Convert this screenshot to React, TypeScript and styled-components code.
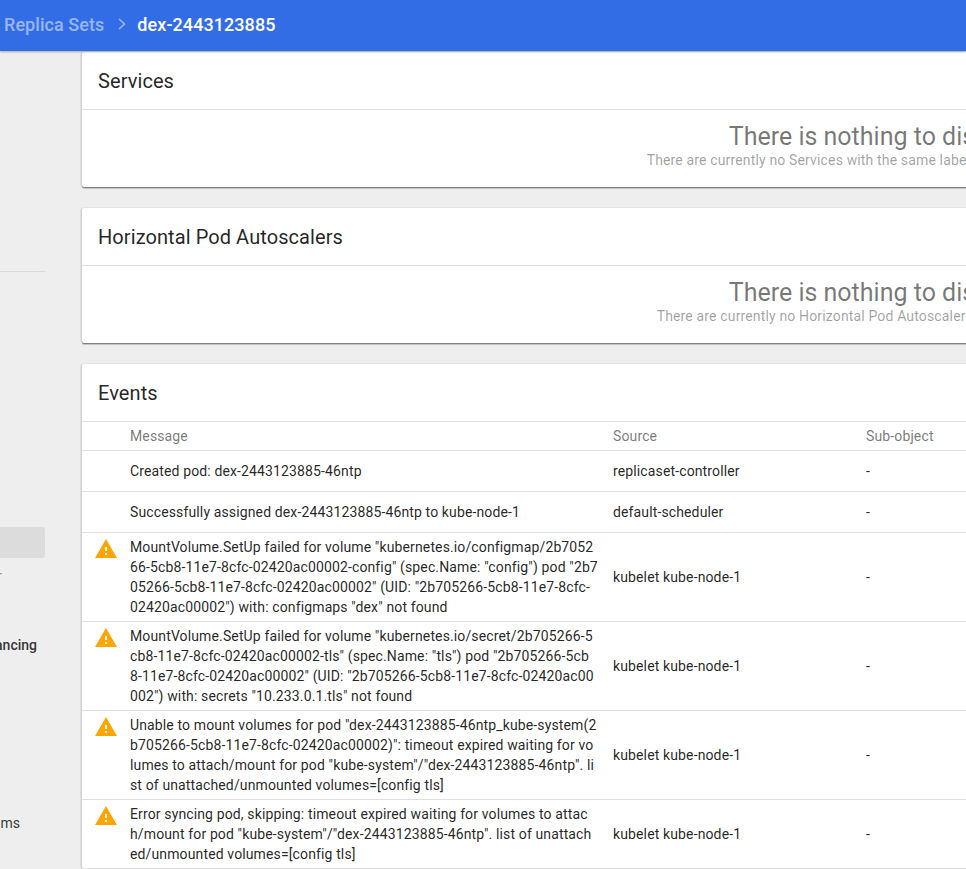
import React from "react";
import styled, { createGlobalStyle } from "styled-components";

const Global = createGlobalStyle`
  html, body { margin: 0; padding: 0; height: 100%; overflow: hidden; background: #eeeeee; }
  body { font-family: Roboto, "Liberation Sans", sans-serif; font-size: 14px; color: rgba(0,0,0,.87); }
  * { box-sizing: border-box; }
`;

const Page = styled.div`
  width: 966px;
  height: 869px;
  overflow: hidden;
  display: flex;
  flex-direction: column;
  background: #eeeeee;
`;
const Toolbar = styled.header`
  flex: 0 0 51px;
  height: 51px;
  background: #326de6;
  display: flex;
  align-items: center;
  padding-left: 4px;
  padding-bottom: 3px;
  box-shadow: 0 1px 2px rgba(0,0,0,.3);
  z-index: 2;
  font-size: 18px;
  font-weight: 500;
  letter-spacing: .06px;
  white-space: nowrap;
`;
const CrumbLink = styled.span`
  color: rgba(255,255,255,.5);
`;
const CrumbArrow = styled.svg`
  width: 10px;
  height: 14px;
  margin: 0 10px 0 13px;
`;
const CrumbCurrent = styled.span`
  color: #ffffff;
`;
const Body = styled.div`
  flex: 1;
  display: flex;
  min-height: 0;
`;
const Sidebar = styled.nav`
  flex: 0 0 82px;
  width: 82px;
  padding-right: 37px;
`;
const SideInner = styled.div`
  width: 45px;
  display: flex;
  flex-direction: column;
  font-size: 14px;
  white-space: nowrap;
`;
const SideRule = styled.div`
  height: 1px;
  background: #d9d9d9;
  margin-top: 220px;
`;
const SideSelected = styled.div`
  height: 31px;
  background: #dcdcdc;
  border-radius: 0 3px 3px 0;
  margin-top: 255px;
`;
const SideItem = styled.div<{ $top: number; $right: number; $strong?: boolean; $faint?: boolean }>`
  margin-top: ${(p) => p.$top}px;
  height: 20px;
  line-height: 20px;
  display: flex;
  justify-content: flex-end;
  padding-right: ${(p) => p.$right}px;
  font-weight: ${(p) => (p.$strong ? 500 : 400)};
  color: ${(p) => (p.$faint ? "rgba(0,0,0,.4)" : "rgba(0,0,0,.8)")};
`;
const Main = styled.main`
  flex: 0 0 auto;
  width: 1640px;
  display: flex;
  flex-direction: column;
  gap: 21px;
  padding-top: 1px;
`;
const Card = styled.section`
  background: #ffffff;
  border-radius: 2px;
  box-shadow: 0 1px 1px rgba(0,0,0,.4), 0 2px 1px rgba(0,0,0,.15), -2px 0 1px rgba(0,0,0,.07), 0 -1px 0 rgba(0,0,0,.04);
`;
const CardTitle = styled.h2`
  margin: 0;
  height: 58px;
  padding: 0 16px;
  display: flex;
  align-items: center;
  font-size: 20px;
  font-weight: 400;
  letter-spacing: .08px;
  color: rgba(0,0,0,.87);
  border-bottom: 1px solid #e0e0e0;
`;
const Empty = styled.div`
  height: 77px;
  padding-top: 12px;
  text-align: center;
  white-space: nowrap;
`;
const EmptyTitle = styled.div`
  font-size: 25px;
  line-height: 30px;
  margin-bottom: -1px;
  color: rgba(0,0,0,.54);
`;
const EmptyText = styled.div`
  font-size: 14px;
  line-height: 18px;
  letter-spacing: .15px;
  padding-right: 8px;
  color: rgba(0,0,0,.38);
`;
const Row = styled.div<{ $head?: boolean }>`
  display: grid;
  grid-template-columns: 48px 483px 253px 1fr;
  align-items: center;
  min-height: ${(p) => (p.$head ? 29 : 41)}px;
  border-bottom: 1px solid #e0e0e0;
  padding: ${(p) => (p.$head ? 0 : 4)}px 0;
  color: ${(p) => (p.$head ? "rgba(0,0,0,.54)" : "rgba(0,0,0,.87)")};
  line-height: 20px;
  letter-spacing: .13px;
`;
const IconCell = styled.div`
  display: flex;
  justify-content: flex-end;
  align-self: start;
  width: 36px;
`;
const MessageCell = styled.div`
  white-space: nowrap;
`;
const MessageLine = styled.div``;
const Warn = styled.svg`
  width: 24px;
  height: 24px;
  display: block;
  flex: none;
  fill: #ffa500;
`;

const WarnIcon = () => (
  <Warn viewBox="0 0 24 24">
    <path d="M1 21h22L12 2 1 21zm12-3h-2v-2h2v2zm0-4h-2v-4h2v4z" />
  </Warn>
);

const events = [
  { w: false, m: ["Created pod: dex-2443123885-46ntp"], s: "replicaset-controller" },
  { w: false, m: ["Successfully assigned dex-2443123885-46ntp to kube-node-1"], s: "default-scheduler" },
  {
    w: true,
    m: [
      'MountVolume.SetUp failed for volume "kubernetes.io/configmap/2b7052',
      '66-5cb8-11e7-8cfc-02420ac00002-config" (spec.Name: "config") pod "2b7',
      '05266-5cb8-11e7-8cfc-02420ac00002" (UID: "2b705266-5cb8-11e7-8cfc-',
      '02420ac00002") with: configmaps "dex" not found',
    ],
    s: "kubelet kube-node-1",
  },
  {
    w: true,
    m: [
      'MountVolume.SetUp failed for volume "kubernetes.io/secret/2b705266-5',
      'cb8-11e7-8cfc-02420ac00002-tls" (spec.Name: "tls") pod "2b705266-5cb',
      '8-11e7-8cfc-02420ac00002" (UID: "2b705266-5cb8-11e7-8cfc-02420ac00',
      '002") with: secrets "10.233.0.1.tls" not found',
    ],
    s: "kubelet kube-node-1",
  },
  {
    w: true,
    m: [
      'Unable to mount volumes for pod "dex-2443123885-46ntp_kube-system(2',
      'b705266-5cb8-11e7-8cfc-02420ac00002)": timeout expired waiting for vo',
      'lumes to attach/mount for pod "kube-system"/"dex-2443123885-46ntp". li',
      "st of unattached/unmounted volumes=[config tls]",
    ],
    s: "kubelet kube-node-1",
  },
  {
    w: true,
    m: [
      "Error syncing pod, skipping: timeout expired waiting for volumes to attac",
      'h/mount for pod "kube-system"/"dex-2443123885-46ntp". list of unattach',
      "ed/unmounted volumes=[config tls]",
    ],
    s: "kubelet kube-node-1",
  },
];

export default function App() {
  return (
    <Page>
      <Global />
      <Toolbar>
        <CrumbLink>Replica Sets</CrumbLink>
        <CrumbArrow viewBox="0 0 10 14" fill="none" stroke="rgba(255,255,255,.5)" strokeWidth="1.6">
          <path d="M2 2l5.5 5L2 12" />
        </CrumbArrow>
        <CrumbCurrent>dex-2443123885</CrumbCurrent>
      </Toolbar>
      <Body>
        <Sidebar>
          <SideInner>
            <SideRule />
            <SideSelected />
            <SideItem $top={8} $right={43} $faint>r</SideItem>
            <SideItem $top={49} $right={8} $strong>ancing</SideItem>
            <SideItem $top={158} $right={25}>ms</SideItem>
          </SideInner>
        </Sidebar>
        <Main>
          <Card>
            <CardTitle>Services</CardTitle>
            <Empty>
              <EmptyTitle>There is nothing to display here</EmptyTitle>
              <EmptyText>There are currently no Services with the same label selector as this Replica Set.</EmptyText>
            </Empty>
          </Card>
          <Card>
            <CardTitle>Horizontal Pod Autoscalers</CardTitle>
            <Empty>
              <EmptyTitle>There is nothing to display here</EmptyTitle>
              <EmptyText>There are currently no Horizontal Pod Autoscalers targeting this Replica Set.</EmptyText>
            </Empty>
          </Card>
          <Card>
            <CardTitle>Events</CardTitle>
            <Row $head>
              <span />
              <span>Message</span>
              <span>Source</span>
              <span>Sub-object</span>
            </Row>
            {events.map((e, i) => (
              <Row key={i}>
                <IconCell>{e.w && <WarnIcon />}</IconCell>
                <MessageCell>
                  {e.m.map((line, j) => (
                    <MessageLine key={j}>{line}</MessageLine>
                  ))}
                </MessageCell>
                <span>{e.s}</span>
                <span>-</span>
              </Row>
            ))}
          </Card>
        </Main>
      </Body>
    </Page>
  );
}
